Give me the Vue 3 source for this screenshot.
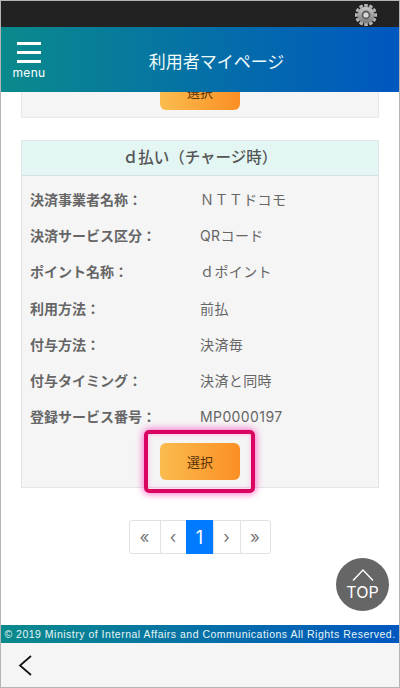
<script setup>
const rows = [
  { label: '決済事業者名称：', value: 'ＮＴＴドコモ' },
  { label: '決済サービス区分：', value: 'QRコード' },
  { label: 'ポイント名称：', value: 'ｄポイント' },
  { label: '利用方法：', value: '前払' },
  { label: '付与方法：', value: '決済毎' },
  { label: '付与タイミング：', value: '決済と同時' },
  { label: '登録サービス番号：', value: 'MP0000197' },
]
const pages = ['«', '‹', '1', '›', '»']
const teeth = [0, 30, 60, 90, 120, 150, 180, 210, 240, 270, 300, 330]
</script>

<template>
  <div class="phone">
    <div class="status">
      <svg class="gear" width="24" height="24" viewBox="0 0 24 24">
        <defs>
          <linearGradient id="gearFill" x1="0" y1="0" x2="0" y2="1">
            <stop offset="0" stop-color="#c8c8c8" />
            <stop offset="1" stop-color="#7d7d7d" />
          </linearGradient>
        </defs>
        <rect v-for="t in teeth" :key="t" x="10.2" y="1" width="3.6" height="5" rx="0.6" fill="url(#gearFill)" :transform="`rotate(${t} 12 12)`" />
        <circle cx="12" cy="12" r="8" fill="url(#gearFill)" />
        <circle cx="12" cy="12" r="4.4" fill="#5c5c5c" />
        <circle cx="12" cy="12" r="2.6" fill="#d8d8d8" />
      </svg>
    </div>

    <header class="head">
      <div class="menu">
        <span class="bar"></span>
        <span class="bar"></span>
        <span class="bar"></span>
        <span class="menu-text">menu</span>
      </div>
      <div class="title">利用者マイページ</div>
    </header>

    <main class="content">
      <div class="stub">
        <button class="pick">選択</button>
      </div>

      <section class="card">
        <h2 class="card-title">ｄ払い（チャージ時）</h2>
        <div class="card-body">
          <div v-for="r in rows" :key="r.label" class="row">
            <span class="label">{{ r.label }}</span>
            <span class="value">{{ r.value }}</span>
          </div>
          <div class="pick-wrap">
            <button class="pick">選択</button>
            <span class="mark"></span>
          </div>
        </div>
      </section>

      <nav class="pager">
        <span v-for="p in pages" :key="p" class="page" :class="{ on: p === '1' }">{{ p }}</span>
      </nav>

      <a class="top">
        <svg width="32" height="14" viewBox="0 0 32 14">
          <path d="M6 12.5 L16 2 L26 12.5" fill="none" stroke="#fff" stroke-width="1.4" />
        </svg>
        <span>TOP</span>
      </a>
    </main>

    <footer class="foot">© 2019 Ministry of Internal Affairs and Communications All Rights Reserved.</footer>

    <div class="nav">
      <svg width="16" height="24" viewBox="0 0 16 24">
        <path d="M14 3 L3 12.5 L14 22" fill="none" stroke="#111" stroke-width="1.7" />
      </svg>
    </div>
  </div>
</template>

<style>
html, body { margin: 0; background: #fff; }
</style>

<style scoped>
.phone {
  width: 400px;
  height: 688px;
  box-sizing: border-box;
  border: 1px solid #b4b4b4;
  display: flex;
  flex-direction: column;
  overflow: hidden;
  font-family: "Inter", "Noto Sans CJK JP", sans-serif;
  color: #555;
  background: #fff;
}
.status {
  height: 26px;
  flex: none;
  background: #222;
  display: flex;
  justify-content: flex-end;
  align-items: center;
  padding-right: 21px;
}
.gear { display: block; margin-top: 1px; }
.head {
  height: 65px;
  flex: none;
  display: flex;
  align-items: center;
  justify-content: center;
  background: linear-gradient(90deg, #0a8a8c 0%, #0057c0 100%);
  color: #fff;
  position: relative;
}
.menu {
  position: absolute;
  left: 11px;
  top: 15px;
  width: 34px;
  display: flex;
  flex-direction: column;
  align-items: center;
}
.bar {
  width: 24px;
  height: 3px;
  background: #fff;
  margin-bottom: 6px;
}
.menu-text {
  font-size: 12px;
  line-height: 12px;
  margin-top: -2px;
  letter-spacing: 0.3px;
}
.title {
  font-size: 17px;
  margin: 2px 0 0 33px;
  color: #f0fbfb;
}
.content {
  flex: 1;
  min-height: 0;
  position: relative;
  overflow: hidden;
  padding: 0 20px;
}
.stub {
  height: 26px;
  box-sizing: border-box;
  background: #f5f5f5;
  border: 1px solid #e8e8e8;
  border-top: 0;
  display: flex;
  justify-content: center;
  align-items: flex-end;
  padding-bottom: 7px;
  overflow: hidden;
}
.pick {
  width: 80px;
  height: 37px;
  flex: none;
  border: 0;
  padding: 0;
  border-radius: 6px;
  background: linear-gradient(90deg, #fbbc4f 0%, #fb8f24 100%);
  color: #5a3206;
  font-family: inherit;
  font-size: 13px;
}
.card {
  margin-top: 22px;
  border: 1px solid #e2e6e6;
  background: #f5f5f5;
}
.card-title {
  margin: 0;
  height: 34px;
  line-height: 34px;
  text-align: center;
  font-size: 15.5px;
  font-weight: 500;
  background: #e3f6f3;
  border-bottom: 1px solid #d2e2e2;
  color: #555;
}
.card-body {
  padding: 5px 8px 7px;
}
.row {
  height: 36.2px;
  display: flex;
  align-items: center;
  font-size: 14px;
}
.label {
  width: 170px;
  flex: none;
  font-weight: 700;
  color: #666;
}
.value {
  color: #666;
  letter-spacing: 0.4px;
}
.pick-wrap {
  position: relative;
  width: 80px;
  margin: 9px auto 0;
  display: flex;
}
.mark {
  position: absolute;
  left: -16px;
  right: -15px;
  top: -13px;
  bottom: -13px;
  border: 4px solid #d9045f;
  border-radius: 5px;
  box-shadow: 0 0 7px 1px rgba(255, 60, 190, 0.75), inset 0 0 5px rgba(255, 60, 190, 0.35);
}
.pager {
  margin-top: 32px;
  display: flex;
  justify-content: center;
}
.page {
  height: 34px;
  box-sizing: border-box;
  width: 28px;
  display: flex;
  align-items: center;
  justify-content: center;
  background: #fff;
  border: 1px solid #e2e2e2;
  margin-left: -1px;
  color: #777;
  font-size: 17px;
}
.page:first-child { width: 32px; border-radius: 3px 0 0 3px; }
.page:nth-child(2) { width: 27px; }
.page:last-child { width: 31px; border-radius: 0 3px 3px 0; }
.page.on {
  background: #007bff;
  border-color: #007bff;
  color: #fff;
  font-size: 18px;
}
.top {
  position: absolute;
  right: 10px;
  top: 466px;
  width: 53px;
  height: 53px;
  border-radius: 50%;
  background: #666;
  color: #fff;
  display: flex;
  flex-direction: column;
  align-items: center;
  justify-content: center;
  font-size: 16px;
  line-height: 18px;
}
.top svg { display: block; margin-bottom: 1px; }
.foot {
  height: 18px;
  flex: none;
  background: linear-gradient(90deg, #0a8a8c 0%, #0057c0 100%);
  color: #e8f6f6;
  font-size: 10.5px;
  line-height: 18px;
  text-align: center;
  white-space: nowrap;
  font-family: "Liberation Sans", sans-serif;
  letter-spacing: 0.5px;
}
.nav {
  height: 44px;
  flex: none;
  background: #f5f5f5;
  display: flex;
  align-items: center;
  padding-left: 16px;
}
</style>
